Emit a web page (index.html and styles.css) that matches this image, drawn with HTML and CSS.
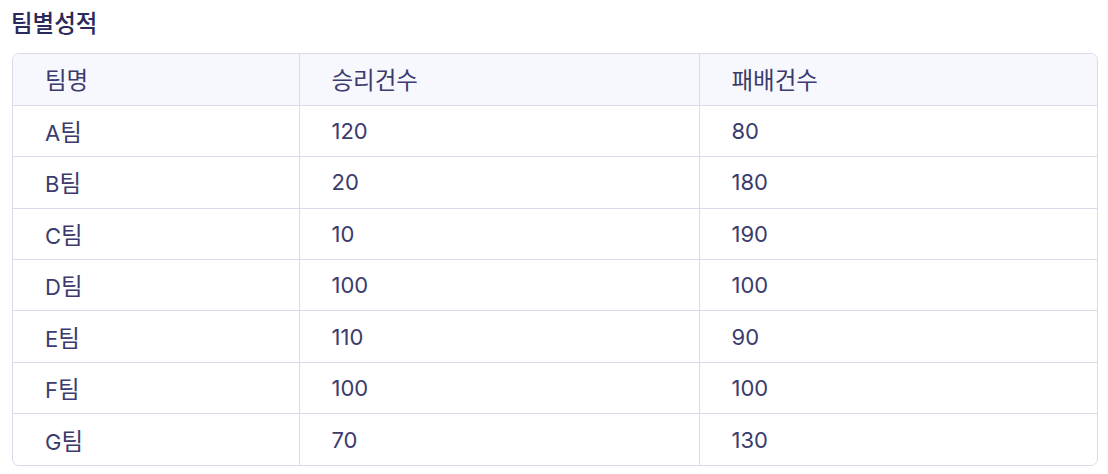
FILE: index.html
```html
<!DOCTYPE html>
<html lang="ko">
<head>
<meta charset="utf-8">
<link rel="stylesheet" href="styles.css">
</head>
<body>
<div class="page">
  <h2 class="title">팀별성적</h2>
  <div class="table-wrap">
    <table class="stats">
      <thead>
        <tr><th class="c1">팀명</th><th class="c2">승리건수</th><th class="c3">패배건수</th></tr>
      </thead>
      <tbody>
        <tr><td>A<span class="ko">팀</span></td><td>120</td><td>80</td></tr>
        <tr><td>B<span class="ko">팀</span></td><td>20</td><td>180</td></tr>
        <tr><td>C<span class="ko">팀</span></td><td>10</td><td>190</td></tr>
        <tr><td>D<span class="ko">팀</span></td><td>100</td><td>100</td></tr>
        <tr><td>E<span class="ko">팀</span></td><td>110</td><td>90</td></tr>
        <tr><td>F<span class="ko">팀</span></td><td>100</td><td>100</td></tr>
        <tr><td>G<span class="ko">팀</span></td><td>70</td><td>130</td></tr>
      </tbody>
    </table>
  </div>
</div>
</body>
</html>
```
FILE: styles.css
```css
* { box-sizing: border-box; }
html, body { margin: 0; padding: 0; background: #ffffff; }
body {
  font-family: "Inter", "Noto Sans CJK KR", sans-serif;
  color: #3b3b6d;
}
.page { padding: 7px 10px 0 11px; }
.title {
  margin: 0 0 16px 0;
  font-size: 23.5px;
  font-weight: 500;
  line-height: 30px;
  color: #2a2a5c;
  font-family: "Noto Sans CJK KR", sans-serif;
}
.table-wrap {
  margin-left: 1px;
  border: 1px solid #d8dce8;
  border-radius: 7px;
  overflow: hidden;
}
.stats {
  width: 100%;
  border-collapse: collapse;
  table-layout: fixed;
}
.stats th, .stats td {
  height: 51.4px;
  padding: 0 0 0 32px;
  text-align: left;
  font-size: 22px;
  font-weight: 400;
  border-left: 1px solid #d8dce8;
  border-top: 1px solid #d8dce8;
  color: #3b3b6d;
}
.stats th { border-top: none; background: #f7f8fe; font-family: "Noto Sans CJK KR", sans-serif; font-size: 23.5px; font-weight: 400; }
.ko { font-family: "Noto Sans CJK KR", sans-serif; font-size: 23.5px; }
.stats th:first-child, .stats td:first-child { border-left: none; }
.c1 { width: 286px; }
.c2 { width: 400px; }
```
